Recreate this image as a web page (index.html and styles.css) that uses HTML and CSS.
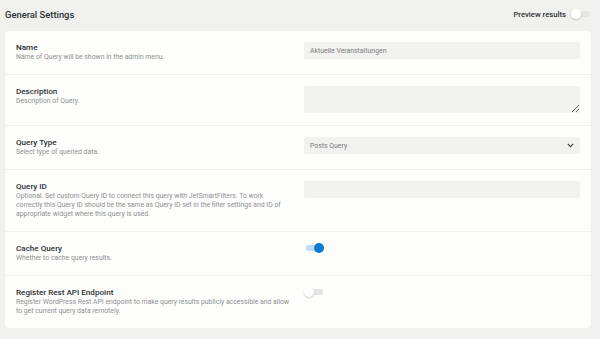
FILE: index.html
```html
<!DOCTYPE html>
<html lang="en">
<head>
    <meta charset="UTF-8">
    <meta name="viewport" content="width=device-width, initial-scale=1.0">
    <title>General Settings</title>
    <link rel="stylesheet" href="styles.css">
</head>
<body>
    <div class="page">
        <div class="header">
            <h1>General Settings</h1>
            <div class="preview">
                <span>Preview results</span>
                <span class="toggle"><span class="knob"></span></span>
            </div>
        </div>

        <div class="card">
            <div class="row">
                <div class="info">
                    <div class="label">Name</div>
                    <div class="desc">Name of Query will be shown in the admin menu.</div>
                </div>
                <div class="control">
                    <input class="field" type="text" value="Aktuelle Veranstaltungen">
                </div>
            </div>

            <div class="row">
                <div class="info">
                    <div class="label">Description</div>
                    <div class="desc">Description of Query.</div>
                </div>
                <div class="control">
                    <textarea class="field area"></textarea>
                </div>
            </div>

            <div class="row">
                <div class="info">
                    <div class="label">Query Type</div>
                    <div class="desc">Select type of queried data.</div>
                </div>
                <div class="control select-wrap">
                    <select class="field">
                        <option>Posts Query</option>
                    </select>
                    <svg class="chevron" width="7" height="5" viewBox="0 0 7 5">
                        <path d="M0.8 0.9 L3.5 3.6 L6.2 0.9" fill="none" stroke="#3c434a" stroke-width="1.1"/>
                    </svg>
                </div>
            </div>

            <div class="row">
                <div class="info">
                    <div class="label">Query ID</div>
                    <div class="desc">Optional. Set custom Query ID to connect this query with JetSmartFilters. To work correctly this Query ID should be the same as Query ID set in the filter settings and ID of appropriate widget where this query is used.</div>
                </div>
                <div class="control">
                    <input class="field" type="text">
                </div>
            </div>

            <div class="row">
                <div class="info">
                    <div class="label">Cache Query</div>
                    <div class="desc">Whether to cache query results.</div>
                </div>
                <div class="control">
                    <span class="toggle on"><span class="knob"></span></span>
                </div>
            </div>

            <div class="row">
                <div class="info">
                    <div class="label">Register Rest API Endpoint</div>
                    <div class="desc">Register WordPress Rest API endpoint to make query results publicly accessible and allow to get current query data remotely.</div>
                </div>
                <div class="control">
                    <span class="toggle"><span class="knob"></span></span>
                </div>
            </div>
        </div>
    </div>
</body>
</html>
```

FILE: styles.css
```css
body {
    margin: 0;
    font-family: Roboto, "Liberation Sans", sans-serif;
    background-color: #f0f0ee;
    color: #23282d;
}
.page {
    padding: 0 9px 0 5px;
}
.header {
    display: flex;
    justify-content: space-between;
    align-items: center;
    height: 31px;
}
h1 {
    margin: 0 0 3px 0;
    font-size: 9.4px;
    font-weight: 500;
    color: #2c3135;
}
.preview {
    display: flex;
    align-items: center;
    gap: 5px;
    font-size: 7.7px;
    font-weight: 500;
    color: #2c3135;
    margin-top: -3px;
}
.card {
    background-color: #fdfdfb;
    border-radius: 4px;
    box-shadow: 0 1px 2px rgba(0, 0, 0, 0.04);
}
.row {
    display: flex;
    padding: 11px 11px 12px 11px;
    border-bottom: 1px solid #efefec;
}
.row:last-child {
    border-bottom: none;
}
.info {
    width: 288px;
    flex-shrink: 0;
    padding-right: 14px;
    box-sizing: border-box;
}
.label {
    font-size: 8.1px;
    font-weight: 500;
    line-height: 11px;
    color: #2c3135;
}
.desc {
    font-size: 6.85px;
    line-height: 9px;
    color: #8d9093;
}
.control {
    flex: 1;
    position: relative;
}
.field {
    display: block;
    width: 100%;
    height: 17px;
    box-sizing: border-box;
    border: none;
    border-radius: 2px;
    background-color: #f1f1ef;
    padding: 0 6px;
    font-family: Roboto, "Liberation Sans", sans-serif;
    font-size: 6.9px;
    color: #7a7d80;
    outline: none;
}
.area {
    height: 27px;
    resize: vertical;
}
select.field {
    appearance: none;
    -webkit-appearance: none;
}
.chevron {
    position: absolute;
    right: 6px;
    top: 6px;
}
.toggle {
    position: relative;
    display: block;
    width: 20px;
    height: 10px;
}
.toggle::before {
    content: "";
    position: absolute;
    left: 2px;
    right: 1px;
    top: 2px;
    height: 6px;
    border-radius: 3px;
    background-color: #e4e4e2;
}
.knob {
    position: absolute;
    left: 0;
    top: 0;
    width: 10px;
    height: 10px;
    border-radius: 50%;
    background-color: #fff;
    box-shadow: 0 1px 2px rgba(0, 0, 0, 0.2);
}
.toggle.on::before {
    background-color: #bfdcf2;
}
.toggle.on .knob {
    left: 10px;
    background-color: #0b7ad1;
    box-shadow: none;
}
```
